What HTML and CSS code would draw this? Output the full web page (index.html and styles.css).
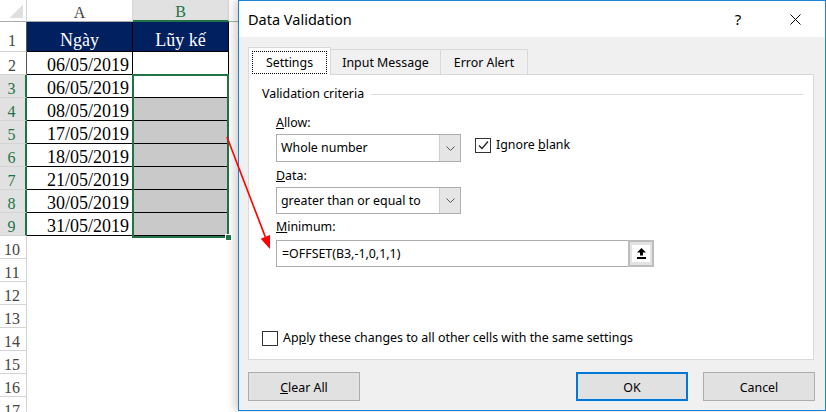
FILE: index.html
```html
<!DOCTYPE html>
<html>
<head>
<meta charset="utf-8">
<title>Data Validation</title>
<link rel="stylesheet" href="styles.css">
</head>
<body>
<div class="screen">
  <div class="sheet">
    <div class="corner"></div>
    <div class="ch">A</div>
    <div class="ch ch-sel">B</div>
    <div class="ch ch-c"></div>

    <div class="rh rh-tbl rh-tall">1</div>
    <div class="cell cell-a hd">Ngày</div>
    <div class="cell cell-b hd">Lũy kế</div>

    <div class="rh rh-tbl">2</div>
    <div class="cell cell-a date">06/05/2019</div>
    <div class="cell cell-b"></div>

    <div class="rh rh-sel">3</div>
    <div class="cell cell-a date">06/05/2019</div>

    <div class="rh rh-sel">4</div>
    <div class="cell cell-a date">08/05/2019</div>

    <div class="rh rh-sel">5</div>
    <div class="cell cell-a date">17/05/2019</div>

    <div class="rh rh-sel">6</div>
    <div class="cell cell-a date">18/05/2019</div>

    <div class="rh rh-sel">7</div>
    <div class="cell cell-a date">21/05/2019</div>

    <div class="rh rh-sel">8</div>
    <div class="cell cell-a date">30/05/2019</div>

    <div class="rh rh-sel">9</div>
    <div class="cell cell-a date">31/05/2019</div>

    <div class="bsel">
      <div class="cell"></div>
      <div class="cell gray"></div>
      <div class="cell gray"></div>
      <div class="cell gray"></div>
      <div class="cell gray"></div>
      <div class="cell gray"></div>
      <div class="cell gray"></div>
      <span class="handle"></span>
    </div>

    <div class="rh">10</div>
    <div class="rh">11</div>
    <div class="rh">12</div>
    <div class="rh">13</div>
    <div class="rh">14</div>
    <div class="rh">15</div>
    <div class="rh">16</div>
    <div class="rh">17</div>
  </div>

  <div class="dialog">
    <div class="titlebar">
      <span class="title">Data Validation</span>
      <span class="help">?</span>
      <span class="close">
        <svg width="11" height="11" viewBox="0 0 11 11"><path d="M0.5 0.5 L10.5 10.5 M10.5 0.5 L0.5 10.5" stroke="#000" stroke-width="1" fill="none"/></svg>
      </span>
    </div>
    <div class="dbody">
      <div class="tabs">
        <div class="tab tab-active"><span class="focus">Settings</span></div>
        <div class="tab tab-input">Input Message</div>
        <div class="tab tab-error">Error Alert</div>
        <div class="tabfill"></div>
      </div>
      <div class="panel">
        <div class="group-head"><span>Validation criteria</span><span class="rule"></span></div>
        <div class="fields">
          <div class="label label-allow"><u>A</u>llow:</div>
          <div class="allow-row">
            <div class="combo combo-allow">
              <span class="combo-text">Whole number</span>
              <span class="combo-btn"><svg width="9" height="5" viewBox="0 0 9 5"><path d="M0.5 0.5 L4.5 4.5 L8.5 0.5" stroke="#555" stroke-width="1" fill="none"/></svg></span>
            </div>
            <div class="check">
              <span class="box"><svg width="13" height="13" viewBox="0 0 13 13"><path d="M2 6.5 L5 9.5 L11 2.5" stroke="#222" stroke-width="1.2" fill="none"/></svg></span>
              <span>Ignore <u>b</u>lank</span>
            </div>
          </div>
          <div class="label label-data"><u>D</u>ata:</div>
          <div class="combo combo-data">
            <span class="combo-text">greater than or equal to</span>
            <span class="combo-btn"><svg width="9" height="5" viewBox="0 0 9 5"><path d="M0.5 0.5 L4.5 4.5 L8.5 0.5" stroke="#555" stroke-width="1" fill="none"/></svg></span>
          </div>
          <div class="label label-min"><u>M</u>inimum:</div>
          <div class="textbox">
            <span class="tb-text">=OFFSET(B3,-1,0,1,1)</span>
            <span class="ref-btn"><span class="ref-inner"><svg width="9" height="11" viewBox="0 0 9 11"><path d="M4.5 0 L9 4.5 L6 4.5 L6 7.5 L3 7.5 L3 4.5 L0 4.5 Z" fill="#000"/><rect x="0" y="9" width="9" height="2" fill="#000"/></svg></span></span>
          </div>
        </div>
        <div class="apply">
          <span class="box"></span>
          <span>Ap<u>p</u>ly these changes to all other cells with the same settings</span>
        </div>
      </div>
      <div class="buttons">
        <div class="btn"><span><u>C</u>lear All</span></div>
        <div class="btn-group">
          <div class="btn btn-ok"><span>OK</span></div>
          <div class="btn"><span>Cancel</span></div>
        </div>
      </div>
    </div>
  </div>

  <svg class="arrow" width="826" height="412" viewBox="0 0 826 412">
    <line x1="227" y1="137" x2="265.3" y2="236.9" stroke="#ff0000" stroke-width="1.6"/>
    <polygon points="270,249 270,235.1 260.7,238.7" fill="#ff0000"/>
  </svg>
</div>
</body>
</html>
```

FILE: styles.css
```css
* {
  box-sizing: border-box;
  margin: 0;
  padding: 0;
}

html, body {
  width: 826px;
  height: 412px;
  overflow: hidden;
  background: #fff;
}

.screen {
  position: relative;
  width: 826px;
  height: 412px;
  overflow: hidden;
}

/* ---------- spreadsheet ---------- */
.sheet {
  display: grid;
  grid-template-columns: 27px 106px 96px 1fr;
  grid-template-rows: 22px 30px;
  grid-auto-rows: 23px;
  font-family: "Liberation Serif", "Times New Roman", serif;
  font-size: 18px;
  color: #000;
  height: 412px;
}

.corner {
  background: #fff linear-gradient(to bottom right, transparent 50%, #dfdfdf 50%) no-repeat right 3px bottom 3px / 14px 13px;
  border-right: 1px solid #d4d4d4;
  border-bottom: 1px solid #ababab;
}

.ch {
  display: flex;
  align-items: flex-end;
  justify-content: center;
  font-size: 16px;
  line-height: 16px;
  color: #444;
  background: #fff;
  border-right: 1px solid #d4d4d4;
  border-bottom: 1px solid #ababab;
}

.ch-sel {
  background: #e1e1e1;
  color: #217346;
  border-bottom: 2px solid #217346;
}

.ch-c {
  border-right: none;
}

.rh {
  grid-column: 1;
  display: flex;
  align-items: flex-end;
  justify-content: center;
  padding-right: 2px;
  font-size: 16px;
  line-height: 16px;
  color: #444;
  background: #fff;
  border-right: 1px solid #d4d4d4;
  border-bottom: 1px solid #d4d4d4;
}

.rh-tbl {
  border-right-color: #555;
}

.rh-tall {
  padding-bottom: 2px;
}

.rh-sel {
  background: #e1e1e1;
  color: #217346;
  border-right: 2px solid #217346;
}

.cell {
  display: flex;
  align-items: flex-end;
  line-height: 18px;
  padding: 0 3px;
  border-right: 1px solid #000;
  border-bottom: 1px solid #000;
  background: #fff;
}

.cell-a {
  grid-column: 2;
}

.cell-b {
  grid-column: 3;
}

.hd {
  background: #002060;
  color: #fff;
  justify-content: center;
  padding-bottom: 2px;
}

.date {
  justify-content: flex-end;
}

.gray {
  background: #c9c9c9;
}

/* selected range B3:B9 */
.bsel {
  grid-column: 3;
  grid-row: 4 / 11;
  display: grid;
  grid-auto-rows: 23px;
  position: relative;
}

.bsel::after {
  content: "";
  position: absolute;
  top: -1px;
  left: -1px;
  right: 0;
  bottom: -2px;
  border: 2px solid #217346;
}

.handle {
  position: absolute;
  right: -3px;
  bottom: -5px;
  width: 7px;
  height: 7px;
  background: #217346;
  border: 1px solid #fff;
  z-index: 1;
}

/* ---------- dialog ---------- */
.dialog {
  position: absolute;
  left: 238px;
  top: 0;
  width: 588px;
  height: 411px;
  border: 1px solid #1883d7;
  background: #f0f0f0;
  box-shadow: -3px 0 9px rgba(0, 0, 0, 0.2);
  display: flex;
  flex-direction: column;
  font-family: "Noto Sans", "Open Sans", sans-serif;
  font-size: 12.4px;
  line-height: 16px;
  color: #000;
}

.titlebar {
  height: 36px;
  flex: none;
  background: #fff;
  display: flex;
  align-items: center;
}

.title {
  padding-left: 9px;
  font-size: 14.5px;
  line-height: 20px;
}

.help {
  margin-left: auto;
  width: 20px;
  text-align: center;
  font-size: 15px;
  line-height: 20px;
}

.close {
  width: 46px;
  height: 36px;
  margin-left: 24px;
  margin-right: 7px;
  display: flex;
  align-items: center;
  justify-content: center;
}

.close svg {
  display: block;
}

.dbody {
  flex: 1;
  display: flex;
  flex-direction: column;
  padding: 10px 11px 0 9px;
}

.tabs {
  display: flex;
  align-items: flex-end;
  height: 28px;
}

.tab {
  height: 26px;
  display: flex;
  align-items: center;
  justify-content: center;
  padding-top: 2px;
  background: #f0f0f0;
  border-top: 1px solid #d9d9d9;
  border-right: 1px solid #d9d9d9;
  border-bottom: 1px solid #d9d9d9;
}

.tab-active {
  height: 28px;
  width: 83px;
  background: #fff;
  border-left: 1px solid #d9d9d9;
  border-bottom: none;
  align-items: flex-start;
  justify-content: flex-start;
  padding: 3px 0 0 3px;
}

.focus {
  width: 75px;
  height: 23px;
  display: flex;
  align-items: center;
  justify-content: center;
  border: 1px dotted #000;
}

.tab-input {
  width: 110px;
}

.tab-error {
  width: 87px;
}

.tabfill {
  flex: 1;
  height: 1px;
  background: #d9d9d9;
}

.panel {
  height: 285px;
  flex: none;
  background: #fff;
  border: 1px solid #d9d9d9;
  border-top: none;
  display: flex;
  flex-direction: column;
  padding: 0 10px 0 13px;
}

.group-head {
  margin-top: 11px;
  display: flex;
  align-items: center;
}

.rule {
  flex: 1;
  height: 1px;
  background: #dcdcdc;
  margin-left: 7px;
}

.fields {
  padding-left: 14px;
  display: flex;
  flex-direction: column;
  align-items: flex-start;
}

.label {
  height: 16px;
}

.label-allow {
  margin-top: 13px;
}

.label-data {
  margin-top: 6px;
}

.label-min {
  margin-top: 5px;
}

.allow-row {
  display: flex;
  align-items: flex-start;
  margin-top: 3px;
}

.combo {
  width: 185px;
  height: 28px;
  display: flex;
  align-items: stretch;
  background: #fff;
  border: 1px solid #adadad;
}

.combo-data {
  height: 27px;
  margin-top: 3px;
}

.combo-text {
  flex: 1;
  display: flex;
  align-items: center;
  padding-left: 4px;
}

.combo-btn {
  width: 21px;
  display: flex;
  align-items: center;
  justify-content: center;
  background: #e5e5e5;
  border-left: 1px solid #cfcfcf;
}

.combo-btn svg {
  display: block;
}

.check {
  display: flex;
  align-items: center;
  margin-left: 14px;
  margin-top: 3px;
  gap: 5px;
}

.box {
  width: 16px;
  height: 15px;
  border: 1px solid #333;
  background: #fff;
  display: flex;
  align-items: center;
  justify-content: center;
}

.box svg {
  display: block;
}

.textbox {
  margin-top: 5px;
  width: 378px;
  height: 27px;
  display: flex;
  align-items: stretch;
  background: #fff;
  border: 1px solid #adadad;
}

.tb-text {
  flex: 1;
  display: flex;
  align-items: center;
  padding-left: 5px;
}

.ref-btn {
  width: 26px;
  display: flex;
  align-items: center;
  justify-content: center;
  background: #e3e3e3;
  border: 2px solid #bdbdbd;
  margin: -1px -1px -1px 0;
}

.ref-inner {
  width: 18px;
  height: 17px;
  background: #fff;
  display: flex;
  align-items: center;
  justify-content: center;
}

.ref-inner svg {
  display: block;
}

.apply {
  margin-top: auto;
  margin-bottom: 13px;
  display: flex;
  align-items: center;
  gap: 5px;
}

.buttons {
  margin-top: 12px;
  display: flex;
  justify-content: space-between;
  margin-right: -1px;
}

.btn-group {
  display: flex;
  gap: 15px;
}

.btn {
  width: 112px;
  height: 29px;
  display: flex;
  align-items: center;
  justify-content: center;
  padding-top: 2px;
  background: #e1e1e1;
  border: 1px solid #adadad;
}

.btn-ok {
  border: 2px solid #0078d7;
}

/* ---------- annotation arrow ---------- */
.arrow {
  position: absolute;
  left: 0;
  top: 0;
  pointer-events: none;
}
```
